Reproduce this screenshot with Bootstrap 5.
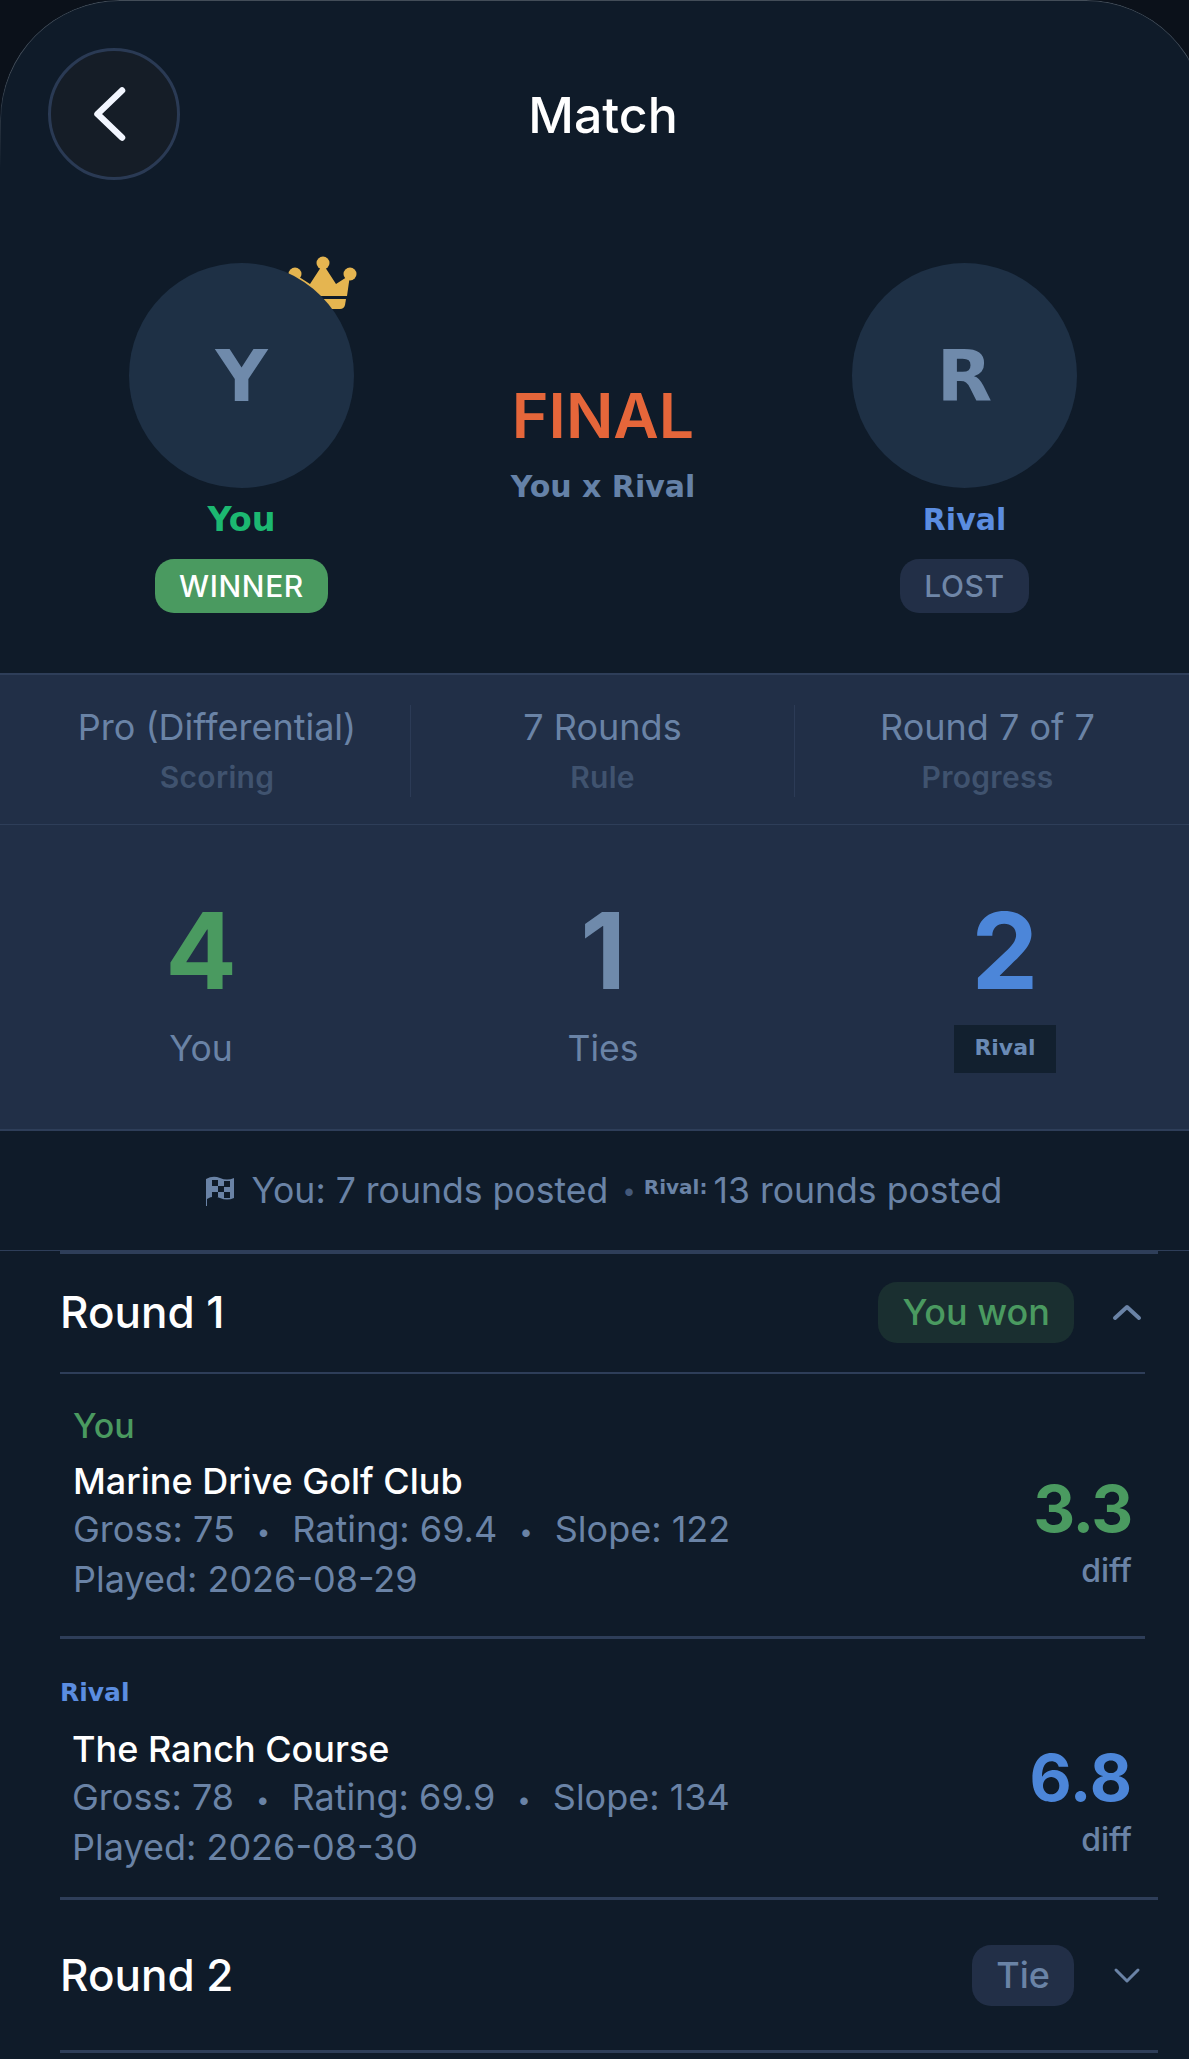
<!DOCTYPE html>
<html lang="en">
<head>
    <meta charset="UTF-8">
    <meta name="viewport" content="width=device-width, initial-scale=1.0">
    <title>Match</title>
    <link href="https://cdn.jsdelivr.net/npm/bootstrap@5.3.3/dist/css/bootstrap.min.css" rel="stylesheet">
    <style>
        body {
            background: #0b111a;
            font-family: 'Inter', 'Liberation Sans', sans-serif;
            color: #fff;
            overflow: hidden;
            height: 100vh;
        }

        /* the screen is a little wider than the window and gets clipped on the right */
        .app-frame {
            position: relative;
            width: 1206px;
            height: 100vh;
            background: #0f1b29;
            border-radius: 120px 120px 0 0;
            overflow: hidden;
        }

        /* thin bright edge of the rounded corners */
        .app-frame::before {
            content: "";
            position: absolute;
            inset: 0 0 auto 0;
            height: 170px;
            border: 1px solid rgba(255, 255, 255, .22);
            border-bottom: 0;
            border-radius: 120px 120px 0 0;
            -webkit-mask-image: linear-gradient(#000 40%, transparent);
            mask-image: linear-gradient(#000 40%, transparent);
            z-index: 5;
        }

        /* Header */
        .top-bar {
            display: grid;
            grid-template-columns: 132px 1fr 132px;
            align-items: center;
            padding: 48px 48px 0;
        }
        .back-btn {
            width: 132px;
            height: 132px;
            border-radius: 50%;
            background: #151d27;
            border: 3px solid #2a3a54;
        }
        .back-icon { margin-right: 8px; }
        .page-title { font-size: 50px; font-weight: 500; margin: 0; padding-top: 2px; }

        /* Players */
        .hero {
            display: grid;
            grid-template-columns: 483px 1fr 483px;
            padding: 83px 0 60px;
        }
        .avatar-wrap { position: relative; width: 225px; height: 225px; }
        .crown { position: absolute; left: 159px; top: -7px; width: 70px; height: 54px; }
        .avatar {
            position: relative;
            width: 225px;
            height: 225px;
            border-radius: 50%;
            background: #1e3045;
            color: #6f8aab;
            font-family: 'DejaVu Sans', sans-serif;
            font-weight: 700;
            font-size: 72px;
        }
        .player-name {
            font-family: 'DejaVu Sans', sans-serif;
            font-size: 30px;
            font-weight: 700;
            line-height: 44px;
            margin-top: 10px;
        }
        .name-you { color: #1cb871; font-size: 33.5px; }
        .name-rival { color: #5b8de0; }
        .status-tag {
            height: 54px;
            margin-top: 17px;
            padding: 0 24px;
            border-radius: 19px;
            font-size: 30px;
            font-weight: 500;
            letter-spacing: .6px;
            line-height: 54px;
        }
        .tag-win { background: #4a9a60; color: #fff; }
        .tag-lost { background: #222f47; color: #6f86a7; }
        .final-word {
            color: #e5663a;
            font-size: 62.5px;
            font-weight: 600;
            line-height: 72px;
            margin-top: 116px;
        }
        .versus {
            color: #6582a8;
            font-family: 'DejaVu Sans', sans-serif;
            font-weight: 700;
            font-size: 30px;
            line-height: 40px;
            margin-top: 16px;
        }

        /* Summary band */
        .meta-band {
            display: grid;
            grid-template-columns: 386px 384px 386px;
            height: 152px;
            padding: 30px 24px 0;
            background: #212f47;
            border-top: 2px solid #2e3e59;
            border-bottom: 1px solid #2e3e59;
        }
        .meta-cell { height: 92px; text-align: center; }
        .meta-cell + .meta-cell { border-left: 1px solid #2c3b56; }
        .meta-value { color: #6a83a6; font-size: 36px; line-height: 44px; }
        .meta-label { color: #40536f; font-size: 30px; font-weight: 600; letter-spacing: .3px; line-height: 40px; margin-top: 8px; }

        .score-band {
            display: grid;
            grid-template-columns: repeat(3, 402px);
            height: 306px;
            background: #212f47;
            border-bottom: 2px solid #2e3e59;
            text-align: center;
        }
        .score-num {
            font-weight: 700;
            font-size: 106px;
            line-height: 104px;
            margin-top: 74px;
        }
        .score-you { color: #4a9a60; }
        .score-tie { color: #6f8aab; }
        .score-rival { color: #4c86d9; }
        .score-label { color: #6a83a6; font-size: 35.5px; line-height: 44px; margin-top: 24px; }
        .rival-chip {
            display: inline-block;
            height: 48px;
            padding: 0 20px;
            margin-top: 22px;
            background: #12202f;
            color: #6a8ab5;
            font-family: 'DejaVu Sans', sans-serif;
            font-weight: 700;
            font-size: 22px;
            line-height: 46px;
        }

        .posted-line {
            height: 120px;
            color: #6a83a6;
            font-size: 35.6px;
            border-bottom: 1px solid #2e3e59;
        }
        .posted-dot { color: #44597a; font-size: 24px; margin: 0 8px 0 14px; }
        .posted-rival {
            font-family: 'DejaVu Sans', sans-serif;
            font-weight: 700;
            font-size: 20px;
            margin-right: 6px;
            position: relative;
            top: -4px;
        }

        /* Rounds */
        .round-head {
            height: 122px;
            margin: -1px 48px 0 60px;
            padding-bottom: 2px;
            border-top: 4px solid #2e3e59;
        }
        .round-title { font-size: 44px; font-weight: 500; }
        .result-pill {
            height: 61px;
            line-height: 61px;
            padding: 0 24px;
            border-radius: 19px;
            font-size: 36px;
            font-weight: 500;
        }
        .pill-won { background: #1a2f30; color: #4a9a60; }
        .pill-tie { background: #222f47; color: #6a83a6; }
        .chevron { width: 32px; height: 20px; margin: 0 15px 0 37px; }

        .entry {
            margin: 0 61px 0 60px;
            border-top: 2px solid #2e3e59;
        }
        .entry-you { height: 264px; padding: 30px 13px 0 13px; }
        .entry-rival { height: 261px; padding: 38px 13px 0 0; border-top-width: 3px; }
        .who-you { color: #4a9a60; font-size: 34px; font-weight: 500; line-height: 44px; }
        .who-rival { color: #5b8de0; font-family: 'DejaVu Sans', sans-serif; font-weight: 700; font-size: 25px; line-height: 32px; }
        .course { font-size: 36px; font-weight: 500; line-height: 48px; margin-top: 9px; }
        .course-rival { margin-top: 16px; }
        .detail { color: #6a83a6; font-size: 36px; line-height: 48.5px; }
        .detail + .detail { margin-top: -2px; }
        .detail-sep { font-size: 24px; margin: 0 22px; vertical-align: 2px; }
        .diff-you { margin-top: 25px; }
        .diff-rival { margin-top: 29px; }
        .diff-num { font-size: 65px; font-weight: 700; line-height: 70px; }
        .diff-tight { letter-spacing: -1.3px; }
        .diff-label { color: #6a83a6; font-size: 32px; font-weight: 500; line-height: 40px; margin-top: 7px; }
        .head-next { border-top-width: 3px; height: 153px; margin-top: 0; padding-bottom: 0; }
        .head-last { border-top: 3px solid #2e3e59; margin: 0 48px 0 60px; }
    </style>
</head>
<body>
    <div class="app-frame">
        <!-- Header -->
        <div class="top-bar">
            <div class="back-btn d-flex align-items-center justify-content-center">
                <svg class="back-icon" width="32" height="54" viewBox="0 0 32 54" fill="none">
                    <path d="M28 3.5 L3.5 27 L28 50.5" stroke="#f2f6ff" stroke-width="6.5" stroke-linecap="round" stroke-linejoin="round"/>
                </svg>
            </div>
            <h1 class="page-title text-center">Match</h1>
        </div>

        <!-- Players -->
        <div class="hero">
            <div class="d-flex flex-column align-items-center">
                <div class="avatar-wrap">
                    <svg class="crown" viewBox="0 0 70 54" fill="#e5b550">
                        <circle cx="35" cy="7" r="6.5"/>
                        <circle cx="62" cy="18" r="6.5"/>
                        <circle cx="7" cy="18" r="6.5"/>
                        <path d="M35 8 L48 28 L62 19 L59 40 L11 40 L8 19 L22 28 Z"/>
                        <path d="M12 43 H58 L57 49 Q56 53 52 53 H18 Q14 53 13 49 Z"/>
                    </svg>
                    <div class="avatar d-flex align-items-center justify-content-center">Y</div>
                </div>
                <div class="player-name name-you">You</div>
                <div class="status-tag tag-win">WINNER</div>
            </div>
            <div class="text-center">
                <div class="final-word">FINAL</div>
                <div class="versus">You x Rival</div>
            </div>
            <div class="d-flex flex-column align-items-center">
                <div class="avatar d-flex align-items-center justify-content-center">R</div>
                <div class="player-name name-rival">Rival</div>
                <div class="status-tag tag-lost">LOST</div>
            </div>
        </div>

        <!-- Summary -->
        <div class="meta-band">
            <div class="meta-cell">
                <div class="meta-value">Pro (Differential)</div>
                <div class="meta-label">Scoring</div>
            </div>
            <div class="meta-cell">
                <div class="meta-value">7 Rounds</div>
                <div class="meta-label">Rule</div>
            </div>
            <div class="meta-cell">
                <div class="meta-value">Round 7 of 7</div>
                <div class="meta-label">Progress</div>
            </div>
        </div>
        <div class="score-band">
            <div>
                <div class="score-num score-you">4</div>
                <div class="score-label">You</div>
            </div>
            <div>
                <div class="score-num score-tie">1</div>
                <div class="score-label">Ties</div>
            </div>
            <div>
                <div class="score-num score-rival">2</div>
                <div class="rival-chip">Rival</div>
            </div>
        </div>

        <div class="posted-line d-flex align-items-center justify-content-center">
            <svg class="me-3" width="32" height="32" viewBox="0 0 32 32">
                <path d="M2 31 L2 4 Q9 0 16 3 Q23 6 30 3 L30 23 Q23 26 16 23 Q9 20 3 24 L3 31 Z" fill="#6a83a6"/>
                <path d="M8 5h6v6H8zM20 6h6v6h-6zM14 11h6v6h-6zM8 17h6v5H8zM20 17h6v6h-6z" fill="#0f1b29"/>
            </svg>
            <span>You: 7 rounds posted</span>
            <span class="posted-dot">&bull;</span>
            <span class="posted-rival">Rival:</span>
            <span>13 rounds posted</span>
        </div>

        <!-- Rounds -->
        <div class="round-head d-flex align-items-center justify-content-between">
            <div class="round-title">Round 1</div>
            <div class="d-flex align-items-center">
                <div class="result-pill pill-won">You won</div>
                <svg class="chevron" viewBox="0 0 32 20" fill="none">
                    <path d="M4 16 L16 5 L28 16" stroke="#6a83a6" stroke-width="4" stroke-linecap="round" stroke-linejoin="round"/>
                </svg>
            </div>
        </div>

        <div class="entry entry-you d-flex justify-content-between">
            <div>
                <div class="who-you">You</div>
                <div class="course">Marine Drive Golf Club</div>
                <div class="detail">Gross: 75<span class="detail-sep">&bull;</span>Rating: 69.4<span class="detail-sep">&bull;</span>Slope: 122</div>
                <div class="detail">Played: 2026-08-29</div>
            </div>
            <div class="text-end align-self-center diff-you">
                <div class="diff-num diff-tight score-you">3.3</div>
                <div class="diff-label">diff</div>
            </div>
        </div>

        <div class="entry entry-rival d-flex justify-content-between">
            <div>
                <div class="who-rival">Rival</div>
                <div class="ms-2 ps-1">
                    <div class="course course-rival">The Ranch Course</div>
                    <div class="detail">Gross: 78<span class="detail-sep">&bull;</span>Rating: 69.9<span class="detail-sep">&bull;</span>Slope: 134</div>
                    <div class="detail">Played: 2026-08-30</div>
                </div>
            </div>
            <div class="text-end align-self-center diff-rival">
                <div class="diff-num score-rival">6.8</div>
                <div class="diff-label">diff</div>
            </div>
        </div>

        <div class="round-head head-next d-flex align-items-center justify-content-between">
            <div class="round-title">Round 2</div>
            <div class="d-flex align-items-center">
                <div class="result-pill pill-tie">Tie</div>
                <svg class="chevron" viewBox="0 0 32 20" fill="none">
                    <path d="M5 5 L16 16 L27 5" stroke="#6a83a6" stroke-width="3" stroke-linecap="round" stroke-linejoin="round"/>
                </svg>
            </div>
        </div>
        <div class="head-last"></div>
    </div>
    <script src="https://cdn.jsdelivr.net/npm/bootstrap@5.3.3/dist/js/bootstrap.bundle.min.js"></script>
</body>
</html>
